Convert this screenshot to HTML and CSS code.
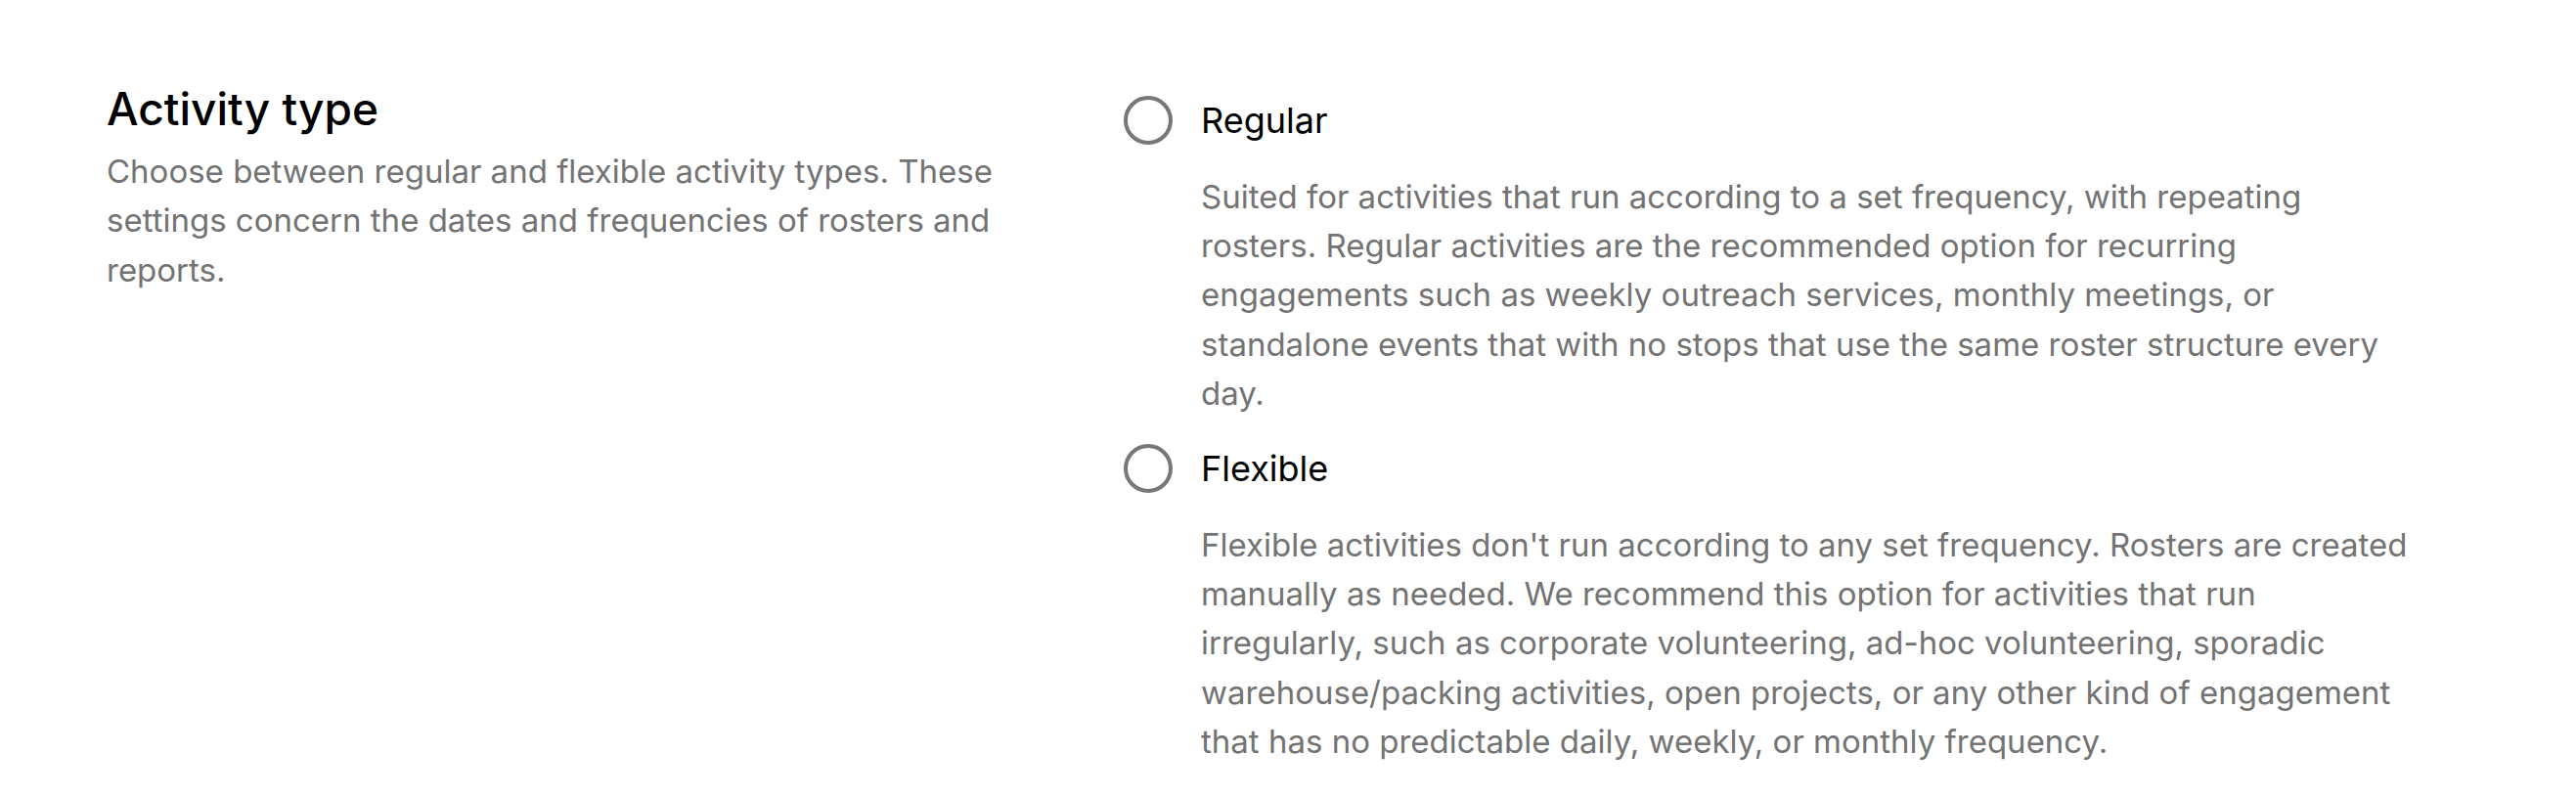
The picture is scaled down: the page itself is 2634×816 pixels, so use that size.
FILE: index.html
```html
<!DOCTYPE html>
<html lang="en">
<head>
<meta charset="utf-8">
<title>Activity type</title>
<link rel="stylesheet" href="styles.css">
</head>
<body>
<section class="setting">
  <div class="intro">
    <h2 class="intro-title">Activity type</h2>
    <p class="intro-text">Choose between regular and flexible activity types. These settings concern the dates and frequencies of rosters and reports.</p>
  </div>
  <div class="options">
    <label class="option">
      <span class="radio"></span>
      <span class="option-label">Regular</span>
      <span class="option-desc">Suited for activities that run according to a set frequency, with repeating rosters. Regular activities are the recommended option for recurring engagements such as weekly outreach services, monthly meetings, or standalone events that with no stops that use the same roster structure every day.</span>
    </label>
    <label class="option">
      <span class="radio"></span>
      <span class="option-label">Flexible</span>
      <span class="option-desc">Flexible activities don't run according to any set frequency. Rosters are created manually as needed. We recommend this option for activities that run irregularly, such as corporate volunteering, ad-hoc volunteering, sporadic warehouse/packing activities, open projects, or any other kind of engagement that has no predictable daily, weekly, or monthly frequency.</span>
    </label>
  </div>
</section>
</body>
</html>
```
FILE: styles.css
```css
html, body {
  margin: 0;
  background: #ffffff;
}

body {
  font-family: Inter, "Noto Sans", sans-serif;
  color: #000000;
}

.setting {
  display: grid;
  grid-template-columns: 930px 1fr;
  column-gap: 110px;
  padding: 83px 164px 40px 109px;
}

.intro-title {
  margin: 0;
  font-size: 46px;
  line-height: 56px;
  font-weight: 500;
  color: #000000;
}

.intro-text {
  margin: 11px 0 0;
  font-size: 33px;
  line-height: 50.4px;
  color: #737373;
}

.options {
  display: flex;
  flex-direction: column;
  gap: 27px;
  padding-top: 15px;
}

.option {
  display: grid;
  grid-template-columns: 50px 1fr;
  column-gap: 29px;
  align-items: center;
}

.radio {
  box-sizing: border-box;
  width: 50px;
  height: 50px;
  border: 4px solid #777777;
  border-radius: 50%;
}

.option-label {
  font-size: 36px;
  line-height: 50px;
  color: #000000;
}

.option-desc {
  grid-column: 2;
  margin-top: 28px;
  font-size: 33px;
  line-height: 50.2px;
  color: #737373;
}
```
